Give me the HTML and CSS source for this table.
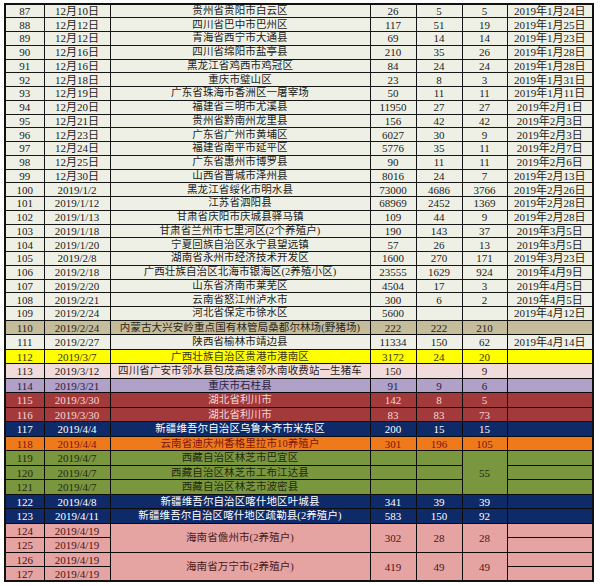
FILE: index.html
```html
<!DOCTYPE html>
<html lang="zh">
<head>
<meta charset="utf-8">
<title>疫情表</title>
<link rel="stylesheet" href="styles.css">
</head>
<body>
<table class="sheet">
<colgroup>
<col class="c1"><col class="c2"><col class="c3"><col class="c4"><col class="c5"><col class="c6"><col class="c7">
</colgroup>
<tbody>
<tr class="r"><td>87</td><td>12月10日</td><td class="loc">贵州省贵阳市白云区</td><td>26</td><td>5</td><td>5</td><td>2019年1月24日</td></tr>
<tr class="r"><td>88</td><td>12月12日</td><td class="loc">四川省巴中市巴州区</td><td>117</td><td>51</td><td>19</td><td>2019年1月25日</td></tr>
<tr class="r"><td>89</td><td>12月12日</td><td class="loc">青海省西宁市大通县</td><td>69</td><td>14</td><td>14</td><td>2019年1月23日</td></tr>
<tr class="r"><td>90</td><td>12月16日</td><td class="loc">四川省绵阳市盐亭县</td><td>210</td><td>35</td><td>26</td><td>2019年1月28日</td></tr>
<tr class="r"><td>91</td><td>12月16日</td><td class="loc">黑龙江省鸡西市鸡冠区</td><td>84</td><td>24</td><td>24</td><td>2019年1月28日</td></tr>
<tr class="r"><td>92</td><td>12月18日</td><td class="loc">重庆市璧山区</td><td>23</td><td>8</td><td>3</td><td>2019年1月31日</td></tr>
<tr class="r"><td>93</td><td>12月19日</td><td class="loc">广东省珠海市香洲区一屠宰场</td><td>50</td><td>11</td><td>11</td><td>2019年1月11日</td></tr>
<tr class="r"><td>94</td><td>12月20日</td><td class="loc">福建省三明市尤溪县</td><td>11950</td><td>27</td><td>27</td><td>2019年2月1日</td></tr>
<tr class="r"><td>95</td><td>12月21日</td><td class="loc">贵州省黔南州龙里县</td><td>156</td><td>42</td><td>42</td><td>2019年2月3日</td></tr>
<tr class="r"><td>96</td><td>12月23日</td><td class="loc">广东省广州市黄埔区</td><td>6027</td><td>30</td><td>9</td><td>2019年2月3日</td></tr>
<tr class="r"><td>97</td><td>12月24日</td><td class="loc">福建省南平市延平区</td><td>5776</td><td>35</td><td>11</td><td>2019年2月7日</td></tr>
<tr class="r"><td>98</td><td>12月25日</td><td class="loc">广东省惠州市博罗县</td><td>90</td><td>11</td><td>11</td><td>2019年2月6日</td></tr>
<tr class="r"><td>99</td><td>12月30日</td><td class="loc">山西省晋城市泽州县</td><td>8016</td><td>24</td><td>7</td><td>2019年2月13日</td></tr>
<tr class="r"><td>100</td><td>2019/1/2</td><td class="loc">黑龙江省绥化市明水县</td><td>73000</td><td>4686</td><td>3766</td><td>2019年2月26日</td></tr>
<tr class="r"><td>101</td><td>2019/1/12</td><td class="loc">江苏省泗阳县</td><td>68969</td><td>2452</td><td>1369</td><td>2019年2月28日</td></tr>
<tr class="r"><td>102</td><td>2019/1/13</td><td class="loc">甘肃省庆阳市庆城县驿马镇</td><td>109</td><td>44</td><td>9</td><td>2019年2月28日</td></tr>
<tr class="r"><td>103</td><td>2019/1/18</td><td class="loc">甘肃省兰州市七里河区(2个养殖户)</td><td>190</td><td>143</td><td>37</td><td>2019年3月5日</td></tr>
<tr class="r"><td>104</td><td>2019/1/20</td><td class="loc">宁夏回族自治区永宁县望远镇</td><td>57</td><td>26</td><td>13</td><td>2019年3月5日</td></tr>
<tr class="r"><td>105</td><td>2019/2/8</td><td class="loc">湖南省永州市经济技术开发区</td><td>1600</td><td>270</td><td>171</td><td>2019年3月23日</td></tr>
<tr class="r"><td>106</td><td>2019/2/18</td><td class="loc">广西壮族自治区北海市银海区(2养殖小区)</td><td>23555</td><td>1629</td><td>924</td><td>2019年4月9日</td></tr>
<tr class="r"><td>107</td><td>2019/2/20</td><td class="loc">山东省济南市莱芜区</td><td>4504</td><td>17</td><td>3</td><td>2019年4月5日</td></tr>
<tr class="r"><td>108</td><td>2019/2/21</td><td class="loc">云南省怒江州泸水市</td><td>300</td><td>6</td><td>2</td><td>2019年4月5日</td></tr>
<tr class="r"><td>109</td><td>2019/2/24</td><td class="loc">河北省保定市徐水区</td><td>5600</td><td></td><td></td><td>2019年4月12日</td></tr>
<tr class="t tan"><td>110</td><td>2019/2/24</td><td class="loc">内蒙古大兴安岭重点国有林管局桑都尔林场(野猪场)</td><td>222</td><td>222</td><td>210</td><td></td></tr>
<tr class="t plain"><td>111</td><td>2019/2/27</td><td class="loc">陕西省榆林市靖边县</td><td>11334</td><td>150</td><td>62</td><td>2019年4月14日</td></tr>
<tr class="t yellow"><td>112</td><td>2019/3/7</td><td class="loc">广西壮族自治区贵港市港南区</td><td>3172</td><td>24</td><td>20</td><td></td></tr>
<tr class="t blush"><td>113</td><td>2019/3/12</td><td class="loc">四川省广安市邻水县包茂高速邻水南收费站一生猪车</td><td>150</td><td></td><td>9</td><td></td></tr>
<tr class="t lilac"><td>114</td><td>2019/3/21</td><td class="loc">重庆市石柱县</td><td>91</td><td>9</td><td>6</td><td></td></tr>
<tr class="t brick"><td>115</td><td>2019/3/30</td><td class="loc">湖北省利川市</td><td>142</td><td>8</td><td>5</td><td></td></tr>
<tr class="t brick"><td>116</td><td>2019/3/30</td><td class="loc">湖北省利川市</td><td>83</td><td>83</td><td>73</td><td></td></tr>
<tr class="t navy"><td>117</td><td>2019/4/4</td><td class="loc">新疆维吾尔自治区乌鲁木齐市米东区</td><td>200</td><td>15</td><td>15</td><td></td></tr>
<tr class="t orange"><td>118</td><td>2019/4/4</td><td class="loc">云南省迪庆州香格里拉市10养殖户</td><td>301</td><td>196</td><td>105</td><td></td></tr>
<tr class="t olive"><td>119</td><td>2019/4/7</td><td class="loc">西藏自治区林芝市巴宜区</td><td></td><td></td><td rowspan="3">55</td><td></td></tr>
<tr class="t olive"><td>120</td><td>2019/4/7</td><td class="loc">西藏自治区林芝市工布江达县</td><td></td><td></td><td></td></tr>
<tr class="t olive"><td>121</td><td>2019/4/7</td><td class="loc">西藏自治区林芝市波密县</td><td></td><td></td><td></td></tr>
<tr class="t navy"><td>122</td><td>2019/4/8</td><td class="loc">新疆维吾尔自治区喀什地区叶城县</td><td>341</td><td>39</td><td>39</td><td></td></tr>
<tr class="t navy"><td>123</td><td>2019/4/11</td><td class="loc">新疆维吾尔自治区喀什地区疏勒县(2养殖户)</td><td>583</td><td>150</td><td>92</td><td></td></tr>
<tr class="t rose"><td>124</td><td>2019/4/19</td><td class="loc" rowspan="2">海南省儋州市(2养殖户)</td><td rowspan="2">302</td><td rowspan="2">28</td><td rowspan="2">28</td><td></td></tr>
<tr class="t rose"><td>125</td><td>2019/4/19</td><td></td></tr>
<tr class="t rose"><td>126</td><td>2019/4/19</td><td class="loc" rowspan="2">海南省万宁市(2养殖户)</td><td rowspan="2">419</td><td rowspan="2">49</td><td rowspan="2">49</td><td></td></tr>
<tr class="t rose"><td>127</td><td>2019/4/19</td><td></td></tr>
</tbody>
</table>
</body>
</html>
```
FILE: styles.css
```css
html, body {
  margin: 0;
  padding: 0;
  background: #ffffff;
}
body {
  padding: 3px 0 0 4px;
}
.sheet {
  border-collapse: collapse;
  table-layout: fixed;
  width: 588px;
  font-family: "Liberation Serif", "Noto Sans CJK SC", serif;
  font-size: 11px;
  color: #1c1c1c;
  border: 2px solid #111;
}
.c1 { width: 39px; }
.c2 { width: 66px; }
.c3 { width: 260px; }
.c4 { width: 46px; }
.c5 { width: 46px; }
.c6 { width: 45px; }
.c7 { width: 86px; }
.sheet td {
  border: 1px solid #161616;
  padding: 0;
  text-align: center;
  vertical-align: middle;
  line-height: 12px;
  white-space: nowrap;
  overflow: hidden;
  background: #eef0e5;
}
.sheet td.loc {
  font-size: 10.5px;
  letter-spacing: 0.1px;
}
.r { height: 13.75px; }
.t { height: 14.5px; }
.t td { border-color: #0c0c0c; border-width: 1.5px; }
.tan td { background: #c5bc9c; color: #2a2418; }
.plain td { background: #eef0e5; }
.yellow td { background: #ffff00; color: #3a3410; }
.blush td { background: #f2dcdb; color: #2a2020; }
.lilac td { background: #b1a0c7; color: #2a1e3e; }
.brick td { background: #a23a3b; color: #f5d6d6; }
.navy td { background: #0e2a68; color: #ffffff; }
.orange td { background: #ef7a1c; color: #7a1410; }
.olive td { background: #7a963e; color: #1e2a10; }
.rose td { background: #e5a3a2; color: #4a1616; }
```
